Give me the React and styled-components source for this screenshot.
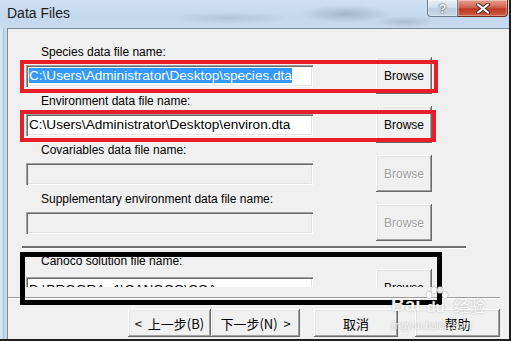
import React from 'react';
import styled, { createGlobalStyle } from 'styled-components';

const Global = createGlobalStyle`
  html, body { margin: 0; padding: 0; background: #fff; }
  body { font-family: "Liberation Sans", Arial, sans-serif; }
`;

const Window = styled.div`
  position: relative;
  width: 511px;
  height: 341px;
  box-sizing: border-box;
  display: flex;
  flex-direction: column;
  overflow: hidden;
  background: #c3d8ee;
  border-right: 2px solid #1f1f1f;
  border-bottom: 2px solid #1f1f1f;
`;

const TitleBar = styled.div`
  height: 28px;
  flex: none;
  display: flex;
  justify-content: space-between;
  align-items: flex-start;
  padding-left: 7px;
  background:
    radial-gradient(ellipse 45px 9px at 345px 14px, rgba(95, 115, 140, 0.35), transparent),
    radial-gradient(ellipse 60px 6px at 230px 18px, rgba(110, 130, 150, 0.22), transparent),
    radial-gradient(ellipse 30px 6px at 405px 22px, rgba(90, 105, 125, 0.25), transparent),
    linear-gradient(#cfe0f2, #c4d8ee 60%, #c8dbef);
`;

const Title = styled.div`
  margin-top: 5px;
  font-size: 14px;
  line-height: 16px;
  color: #1b1b1b;
`;

const CaptionGroup = styled.div`
  display: flex;
  margin-right: 1px;
`;

const CaptionButton = styled.div`
  height: 17px;
  width: ${({ $w }) => $w}px;
  box-sizing: border-box;
  display: flex;
  align-items: center;
  justify-content: center;
  border: 1px solid ${({ $close }) => ($close ? '#6c2b22' : '#6b7d92')};
  border-top: none;
  border-left: ${({ $close }) => ($close ? 'none' : '1px solid #6b7d92')};
  border-radius: ${({ $close }) => ($close ? '0 0 4px 0' : '0 0 0 4px')};
  background: ${({ $close }) =>
    $close
      ? 'linear-gradient(#e4a08f, #d0654f 45%, #bf3a26 55%, #cf5a3e)'
      : 'linear-gradient(#e8eff7, #d3dfec 45%, #bccde0 55%, #c9d8e8)'};
  box-shadow: inset 0 0 0 1px rgba(255, 255, 255, 0.35);
  font: bold 13px "Liberation Sans", Arial, sans-serif;
  color: #fff;
  text-shadow: 0 0 2px #3c4a5a, 0 0 1px #3c4a5a;
`;

const Body = styled.div`
  flex: 1;
  display: flex;
`;

const LeftFrame = styled.div`
  width: 7px;
  flex: none;
  background: linear-gradient(90deg, #d6e4f3 0 3px, #9fb9d6 3px 4px, #c6daef 4px);
`;

const Client = styled.div`
  flex: 1;
  display: flex;
  flex-direction: column;
  background: #f0f0f0;
  border-top: 1px solid #7b8795;
  border-left: 1px solid #7b8795;
`;

const Page = styled.div`
  height: 258px;
  flex: none;
  overflow: hidden;
  display: flex;
  flex-direction: column;
  padding: 16px 0 0 18px;
  box-sizing: border-box;
`;

const Field = styled.div`
  display: flex;
  flex-direction: column;
  margin-top: ${({ $top }) => $top}px;
`;

const Label = styled.div`
  margin-left: 15px;
  height: 14px;
  font-size: 12px;
  line-height: 14px;
  color: #000;
  white-space: nowrap;
`;

const Line = styled.div`
  margin-top: ${({ $top }) => $top}px;
  display: flex;
  align-items: center;
  height: 22px;
`;

const TextBox = styled.div`
  width: 287px;
  height: 22px;
  flex: none;
  box-sizing: border-box;
  padding: ${({ $drop }) => 2 + ($drop || 0)}px 0 0 3px;
  overflow: hidden;
  white-space: nowrap;
  background: ${({ disabled }) => (disabled ? '#f0f0f0' : '#fff')};
  box-shadow: inset 1px 1px #a0a0a0, inset 2px 2px #696969, inset -1px -1px #fff, inset -2px -2px #e3e3e3;
  font-size: 13.6px;
  line-height: 18px;
  color: #000;
`;

const Selected = styled.span`
  background: #3399ff;
  color: #fff;
`;

const Browse = styled.div`
  width: 56px;
  height: 37px;
  flex: none;
  margin: -8px 0 -7px 63px;
  box-sizing: border-box;
  display: flex;
  align-items: center;
  justify-content: center;
  background: #f0f0f0;
  box-shadow: inset -1px -1px #696969, inset 1px 1px #fff, inset -2px -2px #a0a0a0, inset 2px 2px #e3e3e3;
  font-size: 12px;
  color: ${({ disabled }) => (disabled ? '#a0a0a0' : '#000')};
  text-shadow: ${({ disabled }) => (disabled ? '1px 1px #fff' : 'none')};
`;

const Etched = styled.div`
  margin: 12px 0 0 -4px;
  width: 444px;
  height: 2px;
  flex: none;
  background: #707070;
  box-shadow: 0 1px #fff;
`;

const WizardRule = styled.div`
  margin-top: 10px;
  width: 492px;
  height: 0;
  border-top: 1px solid #a0a0a0;
  border-bottom: 1px solid #fff;
`;

const ButtonRow = styled.div`
  margin-top: 10px;
  height: 28px;
  display: flex;
  padding-left: 120px;
`;

const DlgButton = styled.div`
  width: ${({ $w }) => $w}px;
  margin-left: ${({ $gap }) => $gap || 0}px;
  height: 28px;
  box-sizing: border-box;
  display: flex;
  align-items: center;
  justify-content: center;
  background: #f0f0f0;
  box-shadow: inset -1px -1px #696969, inset 1px 1px #fff, inset -2px -2px #a0a0a0, inset 2px 2px #e3e3e3;
  font-family: "Noto Sans CJK SC", "Liberation Sans", sans-serif;
  font-size: 13px;
  color: #000;
  white-space: pre;
`;

const Mark = styled.div`
  position: absolute;
  left: ${({ $x }) => $x}px;
  top: ${({ $y }) => $y}px;
  width: ${({ $w }) => $w}px;
  height: ${({ $h }) => $h}px;
  box-sizing: border-box;
  border: ${({ $t }) => $t}px solid ${({ $c }) => $c};
  pointer-events: none;
`;

const Watermark = styled.div`
  position: absolute;
  left: 391px;
  top: 286px;
  display: flex;
  flex-direction: column;
  align-items: flex-start;
  color: rgba(255, 255, 255, 0.92);
  text-shadow: 0 0 2px rgba(90, 90, 90, 0.45);
  pointer-events: none;
`;

const MarkRow = styled.div`
  display: flex;
  align-items: flex-end;
`;

const Bai = styled.span`
  font: bold 19px "Liberation Sans", Arial, sans-serif;
  line-height: 22px;
`;

const Paw = styled.div`
  position: relative;
  width: 30px;
  height: 30px;
  display: flex;
  align-items: flex-end;
  justify-content: center;
  font: bold 15px "Liberation Sans", Arial, sans-serif;
  line-height: 18px;
`;

const PawIcon = styled.svg`
  position: absolute;
  left: 2px;
  top: 0;
`;

const Jy = styled.span`
  margin-left: 3px;
  font: 16px "Noto Sans CJK SC", sans-serif;
  line-height: 22px;
`;

const Site = styled.div`
  margin-top: 4px;
  font: 10px "Liberation Sans", Arial, sans-serif;
  color: rgba(255, 255, 255, 0.8);
`;

const DataField = ({ label, top = 7, gap = 6, drop, disabled, children }) => (
  <Field $top={top}>
    <Label>{label}</Label>
    <Line $top={gap}>
      <TextBox disabled={disabled} $drop={drop}>{children}</TextBox>
      <Browse disabled={disabled}>Browse</Browse>
    </Line>
  </Field>
);

export default function App() {
  return (
    <>
      <Global />
      <Window>
        <TitleBar>
          <Title>Data Files</Title>
          <CaptionGroup>
            <CaptionButton $w={31}>?</CaptionButton>
            <CaptionButton $w={50} $close>
              <svg width="14" height="11" viewBox="0 0 14 11">
                <path d="M2 1.5 L12 9.5 M12 1.5 L2 9.5" stroke="#4a2a26" strokeWidth="4" strokeLinecap="round" />
                <path d="M2 1.5 L12 9.5 M12 1.5 L2 9.5" stroke="#fff" strokeWidth="2.2" strokeLinecap="round" />
              </svg>
            </CaptionButton>
          </CaptionGroup>
        </TitleBar>
        <Body>
          <LeftFrame />
          <Client>
            <Page>
              <DataField label="Species data file name:" top={0}>
                <Selected>C:\Users\Administrator\Desktop\species.dta</Selected>
              </DataField>
              <DataField label="Environment data file name:">
                C:\Users\Administrator\Desktop\environ.dta
              </DataField>
              <DataField label="Covariables data file name:" disabled />
              <DataField label="Supplementary environment data file name:" disabled />
              <Etched />
              <DataField label="Canoco solution file name:" top={6} gap={9} drop={2}>
                D:\PROGRA~1\CANOCO\CCA
              </DataField>
            </Page>
            <WizardRule />
            <ButtonRow>
              <DlgButton $w={83}>{'<  上一步(B)'}</DlgButton>
              <DlgButton $w={89}>{'下一步(N)  >'}</DlgButton>
              <DlgButton $w={84} $gap={14}>取消</DlgButton>
              <DlgButton $w={85} $gap={17}>帮助</DlgButton>
            </ButtonRow>
          </Client>
        </Body>

        <Mark $x={20} $y={60} $w={418} $h={33} $t={4} $c="#e61e28" />
        <Mark $x={20} $y={110} $w={416} $h={32} $t={4} $c="#e61e28" />
        <Mark $x={20} $y={252} $w={422} $h={53} $t={5} $c="#000" />

        <Watermark>
          <MarkRow>
            <Bai>Bai</Bai>
            <Paw>
              <PawIcon width="26" height="22" viewBox="0 0 26 22">
                <g fill="rgba(255,255,255,0.9)" stroke="rgba(110,110,110,0.5)" strokeWidth="0.6">
                  <ellipse cx="6" cy="9" rx="3" ry="3.6" />
                  <ellipse cx="11" cy="4" rx="3" ry="3.6" />
                  <ellipse cx="17" cy="4" rx="3" ry="3.6" />
                  <ellipse cx="22" cy="9" rx="3" ry="3.6" />
                </g>
              </PawIcon>
              du
            </Paw>
            <Jy>经验</Jy>
          </MarkRow>
          <Site>jingyan.baidu.com</Site>
        </Watermark>
      </Window>
    </>
  );
}
